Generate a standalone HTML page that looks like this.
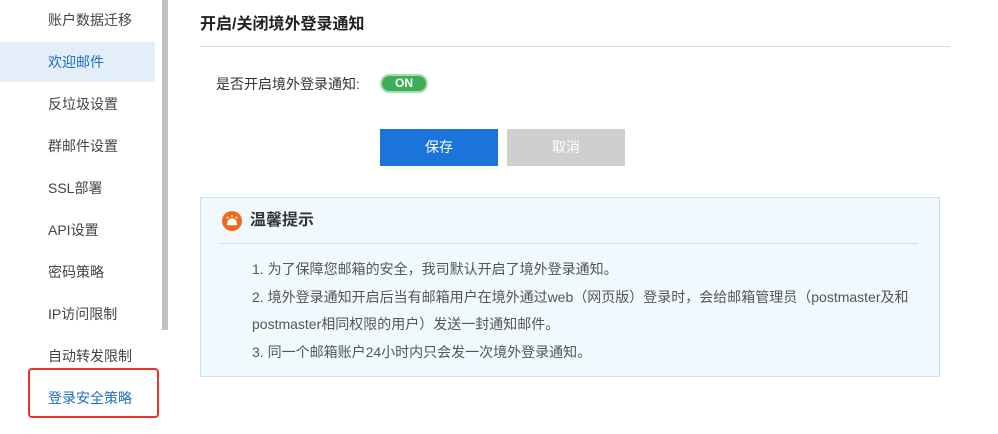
<!DOCTYPE html>
<html><head><meta charset="utf-8"><style>
*{margin:0;padding:0;box-sizing:border-box}
body{width:998px;height:434px;background:#fff;font-family:"Liberation Sans","Noto Sans CJK SC",sans-serif;position:relative;overflow:hidden;color:#333}
.it{position:absolute;left:48px;font-size:14px;color:#444;line-height:20px}
.act{position:absolute;left:0;top:42px;width:155px;height:40px;background:#e3eef9}
.sb{position:absolute;left:162px;top:0;width:6px;height:330px;background:#c1c1c1}
.red{position:absolute;left:28px;top:368px;width:131px;height:50px;border:2px solid #e8322c;border-radius:4px}
.ab{position:absolute}
</style></head><body>
<div class="act"></div>
<div class="sb"></div>
<div class="it" style="top:10px">账户数据迁移</div>
<div class="it" style="top:52px;color:#1f6fc4">欢迎邮件</div>
<div class="it" style="top:94px">反垃圾设置</div>
<div class="it" style="top:136px">群邮件设置</div>
<div class="it" style="top:178px">SSL部署</div>
<div class="it" style="top:220px">API设置</div>
<div class="it" style="top:262px">密码策略</div>
<div class="it" style="top:304px">IP访问限制</div>
<div class="it" style="top:346px">自动转发限制</div>
<div class="it" style="top:388px;color:#1f6fc4">登录安全策略</div>
<div class="red"></div>
<div class="ab" style="left:200px;top:14px;font-size:16px;font-weight:bold;color:#222;line-height:22px">开启/关闭境外登录通知</div>
<div class="ab" style="left:200px;top:46px;width:750px;height:1px;background:#ddd"></div>
<div class="ab" style="left:216px;top:74px;font-size:14px;line-height:20px">是否开启境外登录通知:</div>
<div class="ab" style="left:380px;top:74px;width:48px;height:19px;border-radius:10px;background:#3cae56;border:2px solid #a9dcb4;color:#fff;font-size:12px;font-weight:bold;text-align:center;line-height:15px">ON</div>
<div class="ab" style="left:380px;top:129px;width:118px;height:37px;background:#1b74d9;color:#fff;font-size:14px;text-align:center;line-height:37px">保存</div>
<div class="ab" style="left:507px;top:129px;width:118px;height:37px;background:#cfcfcf;color:#fff;font-size:14px;text-align:center;line-height:37px">取消</div>
<div class="ab" style="left:200px;top:197px;width:740px;height:180px;background:#f0f9fd;border:1px solid #c3e5f0"></div>
<div class="ab" style="left:222px;top:211px;width:20px;height:20px;border-radius:50%;background:#f06a1d"></div>
<svg class="ab" style="left:222px;top:211px" width="20" height="20" viewBox="0 0 20 20"><path d="M6 12a4 4 0 0 1 8 0z M5 13.5h10" stroke="#fff" stroke-width="1.6" fill="#fff"/><path d="M10 4v2M5 6l1.2 1.2M15 6l-1.2 1.2" stroke="#fff" stroke-width="1.4"/></svg>
<div class="ab" style="left:250px;top:210px;font-size:16px;font-weight:bold;color:#333;line-height:22px">温馨提示</div>
<div class="ab" style="left:220px;top:243px;width:698px;height:1px;background:#d5dde0"></div>
<div class="ab" style="left:252px;top:256px;font-size:14px;color:#555;line-height:27.5px;width:700px;white-space:nowrap">
1. 为了保障您邮箱的安全，我司默认开启了境外登录通知。<br>
2. 境外登录通知开启后当有邮箱用户在境外通过web（网页版）登录时，会给邮箱管理员（postmaster及和<br>
postmaster相同权限的用户）发送一封通知邮件。<br>
3. 同一个邮箱账户24小时内只会发一次境外登录通知。</div>
</body></html>
